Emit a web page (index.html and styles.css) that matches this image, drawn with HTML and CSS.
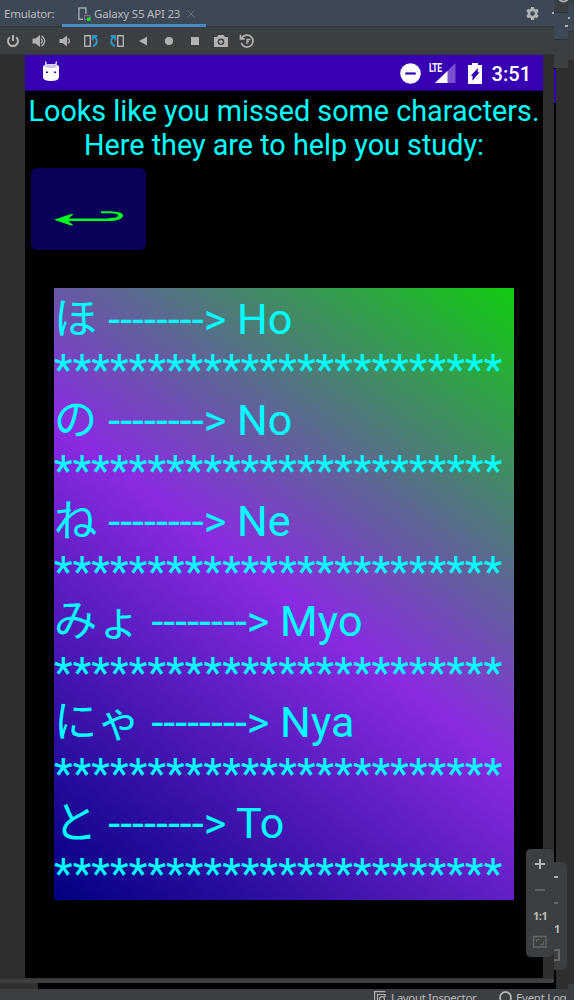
FILE: index.html
```html
<!DOCTYPE html>
<html lang="en">
<head>
<meta charset="utf-8">
<title>Emulator</title>
<link rel="stylesheet" href="styles.css">
</head>
<body>
<div class="desktop">
  <div class="windows">
    <section class="emulator">
      <header class="titlebar">
        <span class="label">Emulator:</span>
        <div class="tab">
          <svg class="tab-icon" width="13" height="15" viewBox="0 0 13 15"><path d="M5 12.2H.9V.9h7v6" fill="none" stroke="#9da4aa" stroke-width="1.5"/><rect x="6.5" y="8.5" width="5.500" height="4" fill="none" stroke="#8269a5"/><rect x="9" y="10.500" width="3.500" height="3.500" fill="#0be51b"/></svg>
          <span class="tab-name">Galaxy S5 API 23</span>
          <svg class="close" width="8" height="8" viewBox="0 0 8 8"><path d="M.5.5l7 7M7.5.5l-7 7" stroke="#687480"/></svg>
        </div>
        <svg class="gear" width="13" height="13" viewBox="0 0 14 14"><path fill="#afb1b3" fill-rule="evenodd" d="M5.4 0h3.2l.4 2 1.1.6 1.9-.7 1.6 2.8-1.5 1.4v1.8l1.5 1.4-1.6 2.8-1.9-.7-1.1.6-.4 2H5.4L5 12l-1.1-.6-1.9.7L.4 9.3l1.5-1.4V6.1L.4 4.7 2 1.9l1.9.7L5 2zM7 4.6a2.4 2.4 0 100 4.8 2.4 2.4 0 000-4.8z"/></svg>
        <i class="minimize"></i>
      </header>
      <nav class="toolbar">
        <svg viewBox="0 0 16 16"><path d="M4.800 4.200a5 5 0 106.400 0M8 2v6" fill="none" stroke="#afb1b3" stroke-width="2"/></svg>
        <svg viewBox="0 0 16 16"><path d="M1.500 5.500h3L9 2v12l-4.500-3.500h-3z" fill="#afb1b3"/><path d="M10 5.500q2.500 2.500 0 5M10.500 2.800q6.500 5.200 0 10.400" fill="none" stroke="#afb1b3" stroke-width="1.400"/></svg>
        <svg viewBox="0 0 16 16"><path d="M2.500 6h3L10 2.500v11L5.500 10h-3z" fill="#afb1b3"/><path d="M11 5.500q2.700 2.500 0 5" fill="none" stroke="#afb1b3" stroke-width="1.400"/></svg>
        <svg viewBox="0 0 16 16"><path d="M1.700 2.700h5.600v10.600H1.700z" fill="none" stroke="#afb1b3" stroke-width="1.400"/><path d="M10 13.200c4.800-2 4.800-6.500 1.500-9.500M9.800 7.500V3h4.500" fill="none" stroke="#3592c4" stroke-width="2"/></svg>
        <svg viewBox="0 0 16 16"><path d="M8.700 2.700h5.600v10.600H8.700z" fill="none" stroke="#afb1b3" stroke-width="1.400"/><path d="M6 13.200C1.200 11.200 1.200 6.700 4.500 3.700M6.200 7.500V3H1.700" fill="none" stroke="#3592c4" stroke-width="2"/></svg>
        <svg viewBox="0 0 16 16"><path d="M12 3.700v8.800L4 8z" fill="#afb1b3"/></svg>
        <svg viewBox="0 0 16 16"><circle cx="8" cy="8" r="4.100" fill="#afb1b3"/></svg>
        <svg viewBox="0 0 16 16"><path d="M4 4h8v8H4z" fill="#afb1b3"/></svg>
        <svg viewBox="0 0 16 16"><path fill="#afb1b3" fill-rule="evenodd" d="M1 4h3l1.500-2h5L12 4h3v10H1zM8 5.500a3.300 3.300 0 100 6.600 3.300 3.300 0 000-6.600z"/><circle cx="8" cy="8.800" r="1.900" fill="#afb1b3"/></svg>
        <svg viewBox="0 0 16 16"><path d="M2.800 5a6 6 0 11-.5 5M1.500 1.800v4h4.200" fill="none" stroke="#afb1b3" stroke-width="1.700"/><path d="M8 11V6.500h3.500M8 8.500h2" fill="none" stroke="#afb1b3" stroke-width="1.300"/></svg>
      </nav>
      <div class="stage">
        <main class="phone">
          <div class="status">
            <svg class="droid" width="18" height="21" viewBox="0 0 18 21"><path d="M4.500 5L3.500.500M13.500 5l1-4.500" stroke="#fff" stroke-width="1.200"/><path d="M1 6q0-3 8-3t8 3v10q0 4-8 4t-8-4z" fill="#fff"/><ellipse cx="9" cy="5.200" rx="6.500" ry="1.700" fill="#cfc2ef"/><path d="M4 10.500h2v1.500H4zM12 10.500h2v1.500h-2z" fill="#3700b3"/></svg>
            <svg class="dnd" width="21" height="21" viewBox="0 0 21 21"><circle cx="10.500" cy="10.500" r="10.300" fill="#fff"/><path d="M5.300 10.500h10.400" stroke="#3700b3" stroke-width="2.200"/></svg>
            <div class="signal">
              <svg width="21" height="21" viewBox="0 0 21 21"><path d="M20.500 0v20H0z" fill="#7b50cd"/><path d="M12.500 8v12H0z" fill="#fff"/></svg>
              <span class="lte">LTE</span>
            </div>
            <svg class="battery" width="14" height="21" viewBox="0 0 14 21"><path d="M4 0h6v2h4v19H0V2h4z" fill="#fff"/><path d="M9.800 5v4.300h1.700L4.500 17.800v-5H2.800z" fill="#3700b3"/></svg>
            <span class="clock">3:51</span>
          </div>
          <h1 class="heading">Looks like you missed some characters.<br>Here they are to help you study:</h1>
          <button class="back" aria-label="Back"><svg width="70" height="16" viewBox="0 0 70 16"><path d="M12 9h43v-2c6 0 9-.8 9-2.500 0-1.800-4-2.300-17-2.200v-2c15-.2 22 .8 22 4.200 0 3.500-6 5.500-15 5.500H12z" fill="#00ff1e"/><path d="M12 7.500h45v2H12z" fill="#00ff1e"/><path d="M0 8.700L17 3h2.500L14 8v1.400l5.500 5.100H17z" fill="#00ff1e"/></svg></button>
          <div class="study" lang="ja">
            <p><span class="kana">ほ</span> --------&gt; Ho</p><p class="stars">************************</p>
            <p><span class="kana">の</span> --------&gt; No</p><p class="stars">************************</p>
            <p><span class="kana">ね</span> --------&gt; Ne</p><p class="stars">************************</p>
            <p><span class="kana">みょ</span> --------&gt; Myo</p><p class="stars">************************</p>
            <p><span class="kana">にゃ</span> --------&gt; Nya</p><p class="stars">************************</p>
            <p><span class="kana">と</span> --------&gt; To</p><p class="stars">************************</p>
          </div>
        </main>
      </div>
      <div class="window-edge"></div>
      <div class="editor-gap"><i></i></div>
      <aside class="zoom">
        <svg width="28" height="108" viewBox="0 0 28 108"><path d="M9 15h10M14 10v10" stroke="#b4b6b8" stroke-width="2"/><path d="M9 41h10" stroke="#6a6c6d" stroke-width="1.600"/><path d="M7.500 87.500h12.500v10.500H7.500z" fill="none" stroke="#656769" stroke-width="1.400"/><path d="M10.500 93v-2.500h3M17.500 92.500v3h-3" fill="none" stroke="#656769"/></svg>
        <span>1:1</span>
      </aside>
    </section>
    <aside class="behind">
      <div class="behind-near">
        <svg width="14" height="12" viewBox="0 0 14 12"><path d="M5-2.500a4.500 4 0 009 0" fill="none" stroke="#afb1b3" stroke-width="2"/></svg>
        <div class="near-title"></div><div class="near-tools"></div>
        <div class="near-stage"><i></i></div>
      </div>
      <div class="behind-far"><div class="far-title"></div><div class="far-tools"></div></div>
      <div class="behind-zoom"><i></i><i></i><span>1</span><b></b></div>
      <div class="dots"><i></i><i></i></div>
    </aside>
  </div>
  <footer class="statusbar">
    <svg class="inspect" width="12" height="13" viewBox="0 0 12 13"><path d="M.6 9V.6h10.800M3.500 11V3.500H11V6" fill="none" stroke="#afb1b3" stroke-width="1.200"/><circle cx="8" cy="8.200" r="2.500" fill="none" stroke="#afb1b3" stroke-width="1.200"/></svg>
    <span class="inspector">Layout Inspector</span>
    <svg class="event" width="13" height="13" viewBox="0 0 13 13"><circle cx="6.500" cy="6.500" r="5.500" fill="none" stroke="#afb1b3" stroke-width="1.800"/></svg>
    <span class="log">Event Log</span>
  </footer>
</div>
</body>
</html>
```

FILE: styles.css
```css
* { box-sizing: border-box; }
body { margin: 0; background: #fff; font-family: "Noto Sans", sans-serif; color: #bbb; }
svg { display: block; flex: none; }
i, b { display: block; }
.desktop { width: 574px; height: 1000px; overflow: hidden; display: flex; flex-direction: column; background: #3c3f41; }
.windows { height: 989px; display: flex; flex: none; }
.emulator { width: 554px; position: relative; display: flex; flex-direction: column; }

.titlebar { height: 27px; background: #3d4856; border-bottom: 1px solid #313437; display: flex; align-items: flex-start; font-size: 11.5px; line-height: 27px; white-space: nowrap; }
.label { width: 62px; padding-left: 4px; letter-spacing: -.25px; }
.tab { width: 144px; height: 27px; border-bottom: 3px solid #4a88c7; display: flex; padding-left: 16px; }
.tab-icon { margin-top: 7px; }
.tab-name { width: 92px; margin-left: 3px; letter-spacing: -.2px; }
.close { margin: 10px 0 0 1px; }
.gear { margin: 7px 0 0 320px; }
.minimize { width: 2px; height: 2px; margin: 12px 0 0 13px; background: #afb1b3; }

.toolbar { height: 28px; background: #3c3f41; border-bottom: 1px solid #323437; display: flex; gap: 10px; padding: 6px 0 0 5px; }
.toolbar svg { width: 16px; height: 16px; }

.stage { height: 923px; background: #2d2e30; padding: 0 11px 0 25px; }
.phone { height: 923px; background: #000; font-family: Roboto, "Noto Sans CJK JP", sans-serif; color: #0ff; display: flex; flex-direction: column; align-items: flex-start; }
.status { width: 518px; height: 36px; background: #3700b3; border-bottom: 1px solid #20006a; display: flex; color: #fff; padding-top: 8px; flex: none; }
.droid { margin: -2px 0 0 17px; }
.dnd { margin-left: 340px; }
.signal { position: relative; margin-left: 14px; }
.signal svg { width: 21px; height: 21px; }
.lte { position: absolute; left: -6px; top: -1px; font: 700 12px/12px Roboto, sans-serif; letter-spacing: -.4px; transform: scaleX(.7); transform-origin: left; }
.battery { margin-left: 12px; }
.clock { margin-left: 9.5px; font: 500 20.1px/22px Roboto, sans-serif; }
.heading { margin: 3px 0 1px; width: 518px; height: 68px; font-size: 28.78px; line-height: 34px; font-weight: 400; text-align: center; white-space: nowrap; flex: none; }
.back { width: 115px; height: 82px; margin: 5px 0 0 6px; padding: 43px 0 0 23px; border: 0; border-radius: 6px; background: #0a0057; display: flex; align-items: flex-start; flex: none; }
.study { width: 460px; height: 612px; margin: 38px 0 0 29px; background: linear-gradient(36.93deg, #000080, #8a2be2 50%, #11cc11); font-size: 43.17px; white-space: nowrap; padding-top: 7px; flex: none; }
.study p { margin: 0; height: 50.4px; line-height: 50.4px; }
.study .stars { letter-spacing: .1px; }
.kana { display: inline-block; font-size: 43.17px; line-height: 48px; margin-right: .4px; }

.window-edge { height: 5px; background: #3c3f41; border-top: 1px solid #313335; }
.editor-gap { height: 6px; background: #000; }
.editor-gap i { width: 38px; height: 6px; background: #2f3032; }
.zoom { position: absolute; left: 526px; top: 849px; width: 28px; height: 108px; border-radius: 5px; background: #3c3f41; box-shadow: 0 0 1px #222; z-index: 2; }
.zoom span { position: absolute; left: 7px; top: 60px; font: 700 11px/14px "Noto Sans", sans-serif; letter-spacing: -.5px; }

.behind { width: 20px; position: relative; display: flex; }
.behind-near { width: 14px; display: flex; flex-direction: column; background: #3c3f41; }
.near-title { height: 28px; background: #3d4856; border-bottom: 1px solid #303335; border-top: 1px solid #303335; }
.near-tools { height: 28px; background: #3c3f41; }
.near-stage { height: 921px; background: #2d2e30; border-left: 2px solid #000; position: relative; }
.near-stage i { position: absolute; left: -2px; top: 1px; width: 2px; height: 34px; background: #3700b3; }
.behind-far { width: 6px; background: #2d2e30; border-bottom: 5px solid #3c3f41; }
.far-title { height: 32px; background: #3d4856; border-top: 5px solid #3c3f41; border-bottom: 1px solid #303335; }
.far-tools { height: 28px; background: #3c3f41; }
.behind-zoom { position: absolute; left: 0; top: 862px; width: 13px; height: 108px; background: #3c3f41; border-radius: 0 5px 5px 0; overflow: hidden; }
.behind-zoom i { width: 4px; height: 2px; margin-top: 14px; background: #afb1b3; }
.behind-zoom i + i { margin-top: 24px; background: #656769; }
.behind-zoom span { position: absolute; left: 0; top: 60px; font: 700 11px/14px "Noto Sans", sans-serif; }
.behind-zoom b { position: absolute; left: -7px; top: 87px; width: 13px; height: 12px; border: 2px solid #656769; }
.dots { position: absolute; left: 11px; top: 17px; width: 5px; height: 10px; }
.dots i { width: 2px; height: 2px; background: #afb1b3; margin-left: 3px; }
.dots i + i { margin: 6px 0 0; width: 3px; }

.statusbar { height: 11px; background: #3c3f41; display: flex; align-items: flex-start; overflow: hidden; font-size: 11.5px; line-height: 17px; white-space: nowrap; }
.inspect { margin: 2px 0 0 374px; }
.inspector { margin-left: 5px; width: 108px; letter-spacing: -.35px; }
.event { margin-top: 2px; }
.log { margin-left: 4px; letter-spacing: -.3px; }
```
